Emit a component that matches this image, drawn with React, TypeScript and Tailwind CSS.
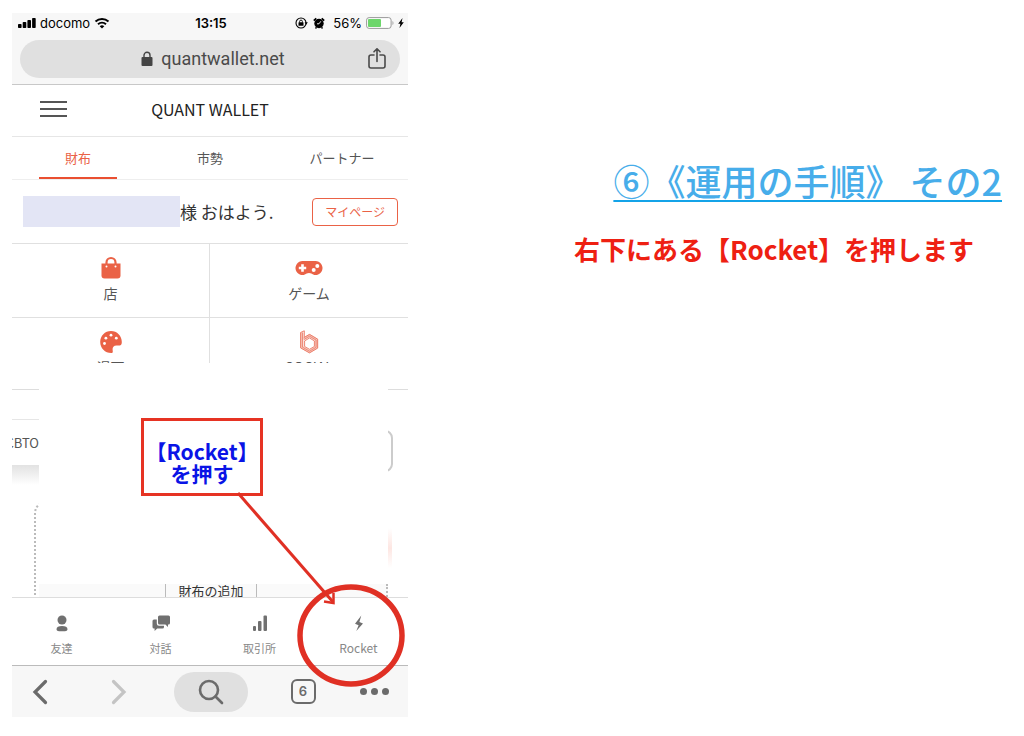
import type { ReactNode } from 'react'

const tabs = [
  { label: '財布', active: true },
  { label: '市勢', active: false },
  { label: 'パートナー', active: false },
]

function BagIcon() {
  return (
    <svg viewBox="0 0 24 24" className="h-6 w-6 fill-[#ea6246]">
      <path d="M7.500 9V6.500a4.500 4.500 0 0 1 9 0V9" fill="none" stroke="#ea6246" strokeWidth="2.200" />
      <path d="M2.500 7.500h19V19.500a3 3 0 0 1-3 3h-13a3 3 0 0 1-3-3z" />
      <circle cx="7.500" cy="10.500" r="1" fill="#fff" />
      <circle cx="16.500" cy="10.500" r="1" fill="#fff" />
    </svg>
  )
}

function GamepadIcon() {
  return (
    <svg viewBox="0 0 28 24" className="h-6 w-7">
      <path d="M7.500 5h13a7 7 0 1 1-4.200 12.600c-1.200-.8-3.400-.8-4.600 0A7 7 0 1 1 7.500 5z" fill="#ea6246" />
      <path d="M7.500 8.300v7.400M3.800 12h7.400" stroke="#fff" strokeWidth="2.600" />
      <circle cx="22.300" cy="10" r="2" fill="#fff" />
      <circle cx="18.700" cy="14" r="2" fill="#fff" />
    </svg>
  )
}

function PaletteIcon() {
  return (
    <svg viewBox="0 0 24 24" className="h-6 w-6">
      <path d="M12 1C5.900 1 1.200 5.800 1.200 12S6 23 12.300 23c2 0 1.500-1.500 1.300-3.200-.2-2.600 1-4.300 4-4.300 2.600 0 5.200.8 5.200-3.500C22.800 5.800 18 1 12 1z" fill="#ea6246" />
      <circle cx="5.500" cy="13.500" r="1.400" fill="#fff" />
      <circle cx="6.900" cy="8.200" r="1.400" fill="#fff" />
      <circle cx="12" cy="5.200" r="1.400" fill="#fff" />
      <circle cx="17.300" cy="8.200" r="1.400" fill="#fff" />
    </svg>
  )
}

function HexIcon() {
  return (
    <svg viewBox="0 0 24 24" className="h-6 w-6" fill="none" strokeLinejoin="round">
      <path d="M5 2.500v14.800l7.500 4.200 7-4.200V9.800l-7-4.200-6 3.400" stroke="#f6c4ba" strokeWidth="3" />
      <path d="M3.600 2.500 7.300.8v6.600l5.200-3 8.200 4.800v8.900l-8.200 4.800-8.900-5z" stroke="#ea7560" strokeWidth=".9" />
      <path d="M5.500 2.500v14.700l7 4 6.600-3.900V10l-6.600-3.800-5.500 3.200" stroke="#ea7560" strokeWidth=".7" />
      <path d="M12.500 8l-4.900 2.900v5.600l4.900 2.800 4.900-2.800v-5.600z" fill="#fff" stroke="#ea7560" strokeWidth=".9" />
    </svg>
  )
}

const tiles: { label: string; icon: ReactNode }[] = [
  { label: '店', icon: <BagIcon /> },
  { label: 'ゲーム', icon: <GamepadIcon /> },
  { label: '漫画', icon: <PaletteIcon /> },
  { label: 'SOCIAL', icon: <HexIcon /> },
]

const navItems: { label: string; size: string; icon: ReactNode }[] = [
  {
    label: '友達',
    size: 'text-[11px]',
    icon: (
      <>
        <circle cx="10" cy="6" r="4.500" />
        <path d="M10 12c3.500 0 5.500 1.200 5.500 3.200 0 1.300-1.200 2-2.500 2H7c-1.300 0-2.500-.7-2.500-2C4.500 13.200 6.500 12 10 12z" />
      </>
    ),
  },
  {
    label: '対話',
    size: 'text-[11px]',
    icon: (
      <>
        <path d="M8.500 1.500h9a1.500 1.500 0 0 1 1.500 1.500v6a1.500 1.500 0 0 1-1.500 1.500H17v2.500l-2.600-2.500H8.500A1.500 1.500 0 0 1 7 9V3a1.500 1.500 0 0 1 1.500-1.500z" />
        <path d="M5.800 5.500H3A1.500 1.500 0 0 0 1.500 7v6A1.500 1.500 0 0 0 3 14.500h.6V17l2.600-2.500h5.300A1.500 1.500 0 0 0 13 13v-1.300H8A2.200 2.200 0 0 1 5.800 9.500z" />
      </>
    ),
  },
  {
    label: '取引所',
    size: 'text-[11px]',
    icon: (
      <>
        <rect x="3" y="12" width="3" height="5" rx="1" />
        <rect x="8" y="7" width="3.500" height="10" rx="1" />
        <rect x="13.500" y="1.500" width="3.500" height="15.500" rx="1" />
      </>
    ),
  },
  {
    label: 'Rocket',
    size: 'text-xs',
    icon: <path d="M12.300 1.500 6 9.800l3.600 1.400L7.300 17l6.700-7.500-3.600-1.600z" />,
  },
]

function StatusBar() {
  return (
    <div className="grid grid-cols-3 items-center pt-[2px] pr-1 pl-[6px] font-['Inter',sans-serif] text-[13px] leading-4 text-black">
      <div className="flex items-center gap-1">
        <svg viewBox="0 0 18 12" className="h-3 w-[18px]">
          <rect x="0" y="7" width="3.600" height="4" rx=".8" />
          <rect x="4.700" y="5" width="3.600" height="6" rx=".8" />
          <rect x="9.400" y="3" width="3.600" height="8" rx=".8" />
          <rect x="14.100" y="1" width="3.600" height="10" rx=".8" />
        </svg>
        <span>docomo</span>
        <svg viewBox="0 0 16 12" className="h-3 w-4" fill="none" stroke="#000" strokeWidth="2">
          <path d="M1.500 4.500a9.500 9.500 0 0 1 13 0M4 7.300a6 6 0 0 1 8 0" />
          <path d="M8 11.500 5.700 9.200a3.400 3.400 0 0 1 4.600 0z" fill="#000" stroke="none" />
        </svg>
      </div>
      <span className="text-center font-semibold">13:15</span>
      <div className="flex items-center justify-end gap-1">
        <svg viewBox="0 0 14 14" className="h-[14px] w-[14px]">
          <circle cx="7" cy="7" r="5" fill="none" stroke="#000" strokeWidth="1.100" />
          <rect x="4.500" y="6.300" width="5" height="3.500" rx=".4" />
          <path d="M5.600 6.600V5.500a1.400 1.400 0 0 1 2.800 0v1.100" fill="none" stroke="#000" strokeWidth=".9" />
          <path d="M10.600 6.300h3.200L12.200 8.800z" />
        </svg>
        <svg viewBox="0 0 14 14" className="h-[14px] w-[14px]">
          <circle cx="7" cy="7.500" r="4.700" />
          <path d="M1.800 4.600 4.300 2.300M12.200 4.600 9.700 2.300" stroke="#000" strokeWidth="1.800" />
          <path d="M3.500 12.500l1-1.200M10.500 12.500l-1-1.200" stroke="#000" strokeWidth="1.400" />
          <path d="M8.800 5.300 7 7.800H5" fill="none" stroke="#fff" strokeWidth=".9" />
        </svg>
        <span className="ml-[3px]">56%</span>
        <svg viewBox="0 0 28 12" className="h-3 w-7">
          <rect x=".6" y=".6" width="24.500" height="10.800" rx="2.500" fill="#fff" stroke="#999" />
          <rect x="2" y="2" width="13" height="8" rx="1" fill="#6dd66b" />
          <path d="M26.500 4v4c1.300-.6 1.300-3.400 0-4z" fill="#999" />
        </svg>
        <svg viewBox="0 0 6 12" className="h-3 w-[6px]">
          <path d="M4.500 1 .2 6.800h2.200L1.500 11 5.800 5.200H3.600z" />
        </svg>
      </div>
    </div>
  )
}

function AddressBar() {
  return (
    <div className="mx-2 mt-[9px] mb-[6px] flex h-[38px] items-center rounded-full bg-[#e0e0e0] pr-[14px] pl-[38px] text-[#4a4a4a]">
      <div className="flex flex-1 items-center justify-center gap-2">
        <svg viewBox="0 0 12 16" className="h-4 w-3">
          <rect x=".5" y="6" width="11" height="9" rx="1" fill="#444" />
          <path d="M3 6.500V4.300a3 3 0 0 1 6 0v2.200" fill="none" stroke="#444" strokeWidth="1.400" />
        </svg>
        <span className="font-['Roboto',sans-serif] text-lg">quantwallet.net</span>
      </div>
      <button aria-label="共有">
        <svg viewBox="0 0 18 22" className="h-[22px] w-[18px]" fill="none" stroke="#4a4a4a" strokeWidth="1.600" strokeLinecap="round" strokeLinejoin="round">
          <path d="M6 7H3a2 2 0 0 0-2 2v9a2 2 0 0 0 2 2h12a2 2 0 0 0 2-2V9a2 2 0 0 0-2-2h-3M9 13.500V1M6 3.800l3-3 3 3" />
        </svg>
      </button>
    </div>
  )
}

function Phone() {
  return (
    <section className="flex flex-col overflow-hidden text-[#555]">
      <div className="border-b border-[#c8c8c8] bg-[#f7f7f7]">
        <StatusBar />
        <AddressBar />
      </div>

      <header className="grid h-[52px] grid-cols-[1fr_auto_1fr] items-center border-b border-[#e6e6e6] pb-1">
        <button aria-label="メニュー" className="ml-7 flex w-[27px] flex-col gap-[5px]">
          <span className="h-[2px] w-full bg-[#555]" />
          <span className="h-[2px] w-full bg-[#555]" />
          <span className="h-[2px] w-full bg-[#555]" />
        </button>
        <h2 className="text-base whitespace-nowrap text-[#222]">QUANT WALLET</h2>
      </header>

      <nav className="grid h-[43px] grid-cols-3 border-b border-[#eee] text-[13px]">
        {tabs.map(tab => (
          <a
            key={tab.label}
            href="#"
            className={
              tab.active
                ? 'mx-[27px] flex items-center justify-center border-b-2 border-[#ea4f31] pt-[2px] text-[#ea6246]'
                : 'flex items-center justify-center'
            }
          >
            {tab.label}
          </a>
        ))}
      </nav>

      <div className="flex h-16 items-center border-b border-[#e0e0e0] pr-[10px] pl-[11px]">
        <span className="h-[31px] w-[157px] bg-[#e3e5f5]" />
        <p className="flex-1 text-[17px] text-[#333]">様 おはよう.</p>
        <button className="h-7 rounded border border-[#ea6246] px-3 text-xs text-[#ea6246]">マイページ</button>
      </div>

      <div className="grid h-[119px] grid-cols-2 grid-rows-[74px_45px] overflow-hidden">
        {tiles.map(tile => (
          <a
            key={tile.label}
            href="#"
            className="flex flex-col items-center gap-[3px] overflow-hidden border-[#e0e0e0] pt-3 text-sm leading-5 odd:border-r nth-[-n+2]:border-b"
          >
            <span className="shrink-0">{tile.icon}</span>
            <span>{tile.label}</span>
          </a>
        ))}
      </div>

      <div className="flex h-[234px] justify-between overflow-hidden pt-[26px]">
        <div className="w-[27px] shrink-0">
          <div className="h-[30px] border-t border-[#ddd]" />
          <div className="flex h-[46px] items-center justify-end overflow-hidden border-t border-[#e6e6e6] text-[13px]">CBTO</div>
          <div className="h-5 bg-linear-to-b from-[#e2e2e2] to-white" />
          <div className="mt-4 ml-[22px] overflow-hidden">
            <div className="h-[100px] w-10 rounded-tl-xl border-2 border-dotted border-[#bbb]" />
          </div>
        </div>
        <div className="flex flex-1 flex-col justify-end">
          <div className="flex h-[13px] justify-center overflow-hidden border-r-2 border-dotted border-r-[#bbb] bg-[#fafafa] pr-[3px]">
            <button className="h-5 border-x border-[#bbb] px-3 pb-[6px] text-[13px] leading-[14px] text-[#333]">財布の追加</button>
          </div>
        </div>
        <div className="flex w-5 shrink-0 flex-col items-start border-t border-[#ddd]">
          <div className="mt-10 w-[5px] overflow-hidden">
            <div className="-ml-6 h-[42px] w-[29px] rounded-lg border-2 border-[#ccc]" />
          </div>
          <div className="mt-14 h-10 w-1 bg-linear-to-b from-white via-[#fde6e2] to-white" />
        </div>
      </div>

      <nav className="grid h-[69px] grid-cols-4 border-y border-t-[#ddd] border-b-[#bbb]">
        {navItems.map(item => (
          <a key={item.label} href="#" className="flex flex-col items-center gap-1 pt-4 text-[#888]">
            <svg viewBox="0 0 20 20" className="h-5 w-5 fill-[#707070]">{item.icon}</svg>
            <span className={`${item.size} leading-5`}>{item.label}</span>
          </a>
        ))}
      </nav>

      <div className="flex h-[51px] items-center justify-between bg-[#f7f7f7] pr-[18px] pl-3 text-[#6b6b6b]">
        <button aria-label="戻る" className="flex w-8 justify-center">
          <svg viewBox="0 0 16 26" className="h-[26px] w-4" fill="none" stroke="currentColor" strokeWidth="3.200" strokeLinecap="round">
            <path d="M13.500 2.500 3 13l10.500 10.500" />
          </svg>
        </button>
        <button aria-label="進む" className="flex w-10 justify-end pr-2 text-[#c4c4c4]">
          <svg viewBox="0 0 16 26" className="h-[26px] w-4" fill="none" stroke="currentColor" strokeWidth="3.200" strokeLinecap="round">
            <path d="M2.500 2.500 13 13 2.500 23.500" />
          </svg>
        </button>
        <button aria-label="検索" className="flex h-10 w-[74px] items-center justify-center rounded-full bg-[#e0e0e0]">
          <svg viewBox="0 0 26 26" className="h-[26px] w-[26px]" fill="none" stroke="currentColor" strokeWidth="2.600" strokeLinecap="round">
            <circle cx="11" cy="11" r="9" />
            <path d="m17.500 17.500 6.500 6.500" />
          </svg>
        </button>
        <button aria-label="タブ" className="flex w-8 justify-center">
          <span className="flex h-[25px] w-[25px] items-center justify-center rounded-md border-2 border-[#6b6b6b] font-['Inter',sans-serif] text-[13px] font-semibold">6</span>
        </button>
        <button aria-label="その他" className="flex w-8 justify-center gap-1">
          <span className="h-[7px] w-[7px] rounded-full bg-[#6b6b6b]" />
          <span className="h-[7px] w-[7px] rounded-full bg-[#6b6b6b]" />
          <span className="h-[7px] w-[7px] rounded-full bg-[#6b6b6b]" />
        </button>
      </div>
    </section>
  )
}

export default function App() {
  return (
    <main className="grid min-h-screen grid-cols-[2fr_3fr] items-start bg-white pt-[13px] pr-[22px] pl-3 font-['Noto_Sans_CJK_JP',sans-serif]">
      <div className="relative">
        <Phone />
        {/* callout drawn over the phone */}
        <p className="absolute top-[405px] left-[129px] flex h-[78px] w-[122px] items-center justify-center border-[3px] border-[#e63323] bg-white pt-[10px] text-center text-[21px] leading-[22px] font-bold whitespace-nowrap text-[#0a14e6]">
          【Rocket】
          <br />
          を押す
        </p>
        <svg viewBox="0 0 396 704" className="pointer-events-none absolute inset-0 h-full w-full" fill="none" stroke="#e03024">
          <path d="M226 480 321 589" strokeWidth="3" />
          <path d="M321.500 580v10l-9.500-1.500" strokeWidth="2.500" />
          <ellipse cx="339" cy="622.500" rx="51" ry="48.500" strokeWidth="5.500" />
        </svg>
      </div>
      <div className="pt-[140px]">
        <h1 className="text-right text-4xl leading-[54px] font-medium whitespace-nowrap text-[#47adea] underline decoration-[#14a3e8] decoration-2 underline-offset-4">
          ⑥《運用の手順》 その2
        </h1>
        <p className="mt-6 pl-[166px] text-[26px] leading-9 font-bold whitespace-nowrap text-[#ee2012]">
          右下にある【Rocket】を押します
        </p>
      </div>
    </main>
  )
}
